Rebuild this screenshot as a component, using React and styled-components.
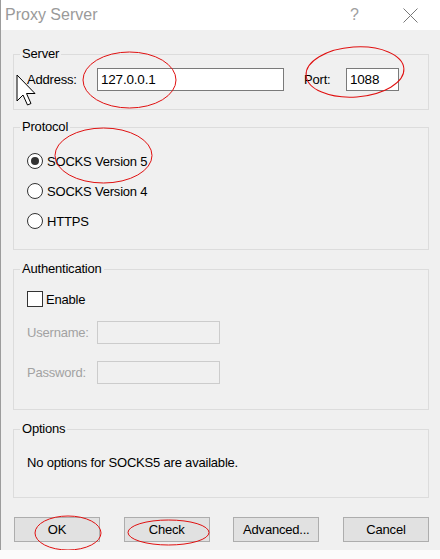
import styled, { createGlobalStyle } from "styled-components";

const GlobalStyle = createGlobalStyle`
  html, body {
    margin: 0;
    padding: 0;
    background: #fbfbfb;
  }
`;

const Window = styled.div`
  position: relative;
  width: 440px;
  height: 550px;
  box-sizing: border-box;
  border-left: 1px solid #9c9c9c;
  background: #f0f0f0;
  display: flex;
  flex-direction: column;
  font-family: "Liberation Sans", Arial, sans-serif;
  font-size: 13px;
  letter-spacing: -0.2px;
  color: #000;
`;

const TitleBar = styled.div`
  height: 30px;
  flex: none;
  background: #fff;
  display: flex;
  align-items: center;
  padding: 0 22px 0 4px;
`;

const Title = styled.div`
  font-size: 16px;
  letter-spacing: 0;
  color: #9a9a9a;
  flex: 1;
`;

const HelpGlyph = styled.div`
  font-size: 16px;
  letter-spacing: 0;
  color: #a0a0a0;
  margin-right: 44px;
`;

const Body = styled.div`
  flex: 1;
  display: flex;
  flex-direction: column;
  padding: 16px 11px 0 12px;
`;

const Group = styled.fieldset`
  margin: ${(p) => p.$mt || 0}px 0 0 0;
  padding: 0;
  border: 1px solid #dcdcdc;
  min-width: 0;
`;

const Legend = styled.legend`
  margin-left: 6px;
  padding: 0 2px;
  line-height: 16px;
`;

const Content = styled.div`
  padding: ${(p) => p.$pt}px 0 ${(p) => p.$pb}px 13px;
  display: flex;
  flex-direction: column;
`;

const Row = styled.div`
  display: flex;
  align-items: center;
  height: ${(p) => p.$h || 23}px;
  margin-top: ${(p) => p.$mt || 0}px;
`;

const Label = styled.span`
  width: ${(p) => p.$w}px;
  margin-left: ${(p) => p.$ml || 0}px;
  color: ${(p) => (p.$disabled ? "#a2a2a2" : "#000")};
  flex: none;
`;

const TextBox = styled.div`
  box-sizing: border-box;
  width: ${(p) => p.$w}px;
  height: 23px;
  border: 1px solid ${(p) => (p.$disabled ? "#cccccc" : "#7a7a7a")};
  background: ${(p) => (p.$disabled ? "#f0f0f0" : "#fff")};
  display: flex;
  align-items: center;
  padding-left: 3px;
  font-size: 13.5px;
`;

const Radio = styled.span`
  box-sizing: border-box;
  width: 16px;
  height: 16px;
  border-radius: 50%;
  border: 1px solid #333;
  background: #fff;
  display: flex;
  align-items: center;
  justify-content: center;
  margin-right: 4px;
  flex: none;

  &::after {
    content: "";
    display: ${(p) => (p.$checked ? "block" : "none")};
    width: 8px;
    height: 8px;
    border-radius: 50%;
    background: #333;
  }
`;

const CheckBox = styled.span`
  box-sizing: border-box;
  width: 16px;
  height: 16px;
  border: 1px solid #333;
  background: #fff;
  margin-right: 3px;
  flex: none;
`;

const Note = styled.div`
  line-height: 16px;
`;

const ButtonRow = styled.div`
  display: flex;
  justify-content: space-between;
  margin-top: 19px;
  padding-left: 1px;
`;

const Button = styled.div`
  box-sizing: border-box;
  width: 86px;
  height: 25px;
  background: #e1e1e1;
  border: 1px solid #adadad;
  display: flex;
  align-items: center;
  justify-content: center;
`;

const Overlay = styled.svg`
  position: absolute;
  left: -1px;
  top: 0;
  width: 440px;
  height: 559px;
  pointer-events: none;
  overflow: visible;
`;

const protocols = [
  { label: "SOCKS Version 5", checked: true },
  { label: "SOCKS Version 4", checked: false },
  { label: "HTTPS", checked: false },
];

const buttons = ["OK", "Check", "Advanced...", "Cancel"];

const App = () => {
  return (
    <>
      <GlobalStyle />
      <Window>
        <TitleBar>
          <Title>Proxy Server</Title>
          <HelpGlyph>?</HelpGlyph>
          <svg width="15" height="15" viewBox="0 0 15 15">
            <path d="M0.5 0.5 L14.5 14.5 M14.5 0.5 L0.5 14.5" stroke="#777" strokeWidth="1" />
          </svg>
        </TitleBar>
        <Body>
          <Group>
            <Legend>Server</Legend>
            <Content $pt={6} $pb={18}>
              <Row>
                <Label $w={70}>Address:</Label>
                <TextBox $w={187}>127.0.0.1</TextBox>
                <Label $w={42} $ml={20}>Port:</Label>
                <TextBox $w={53}>1088</TextBox>
              </Row>
            </Content>
          </Group>

          <Group $mt={9}>
            <Legend>Protocol</Legend>
            <Content $pt={11} $pb={13}>
              {protocols.map((p) => (
                <Row key={p.label} $h={30}>
                  <Radio $checked={p.checked} />
                  {p.label}
                </Row>
              ))}
            </Content>
          </Group>

          <Group $mt={11}>
            <Legend>Authentication</Legend>
            <Content $pt={14} $pb={25}>
              <Row $h={16}>
                <CheckBox />
                Enable
              </Row>
              <Row $mt={14}>
                <Label $w={70} $disabled>Username:</Label>
                <TextBox $w={123} $disabled />
              </Row>
              <Row $mt={17}>
                <Label $w={70} $disabled>Password:</Label>
                <TextBox $w={123} $disabled />
              </Row>
            </Content>
          </Group>

          <Group $mt={11}>
            <Legend>Options</Legend>
            <Content $pt={18} $pb={26}>
              <Note>No options for SOCKS5 are available.</Note>
            </Content>
          </Group>

          <ButtonRow>
            {buttons.map((b) => (
              <Button key={b}>{b}</Button>
            ))}
          </ButtonRow>
        </Body>

        <Overlay viewBox="0 0 440 559">
          <g fill="none" stroke="#e01010" strokeWidth="1">
            <ellipse cx="129.5" cy="80" rx="46.5" ry="28" />
            <ellipse cx="355" cy="72" rx="49" ry="25" transform="rotate(-4 355 72)" />
            <ellipse cx="103.5" cy="155.5" rx="48.5" ry="27.5" />
            <ellipse cx="68" cy="533" rx="33" ry="17" />
            <ellipse cx="168.5" cy="532.5" rx="40.5" ry="12.5" />
          </g>
          <path
            d="M17 75 L17 101 L23 95 L27.5 105 L31 103.5 L26.5 93.5 L35 93.5 Z"
            fill="#fff"
            stroke="#000"
            strokeWidth="1"
            strokeLinejoin="miter"
          />
        </Overlay>
      </Window>
    </>
  );
};

export default App;
